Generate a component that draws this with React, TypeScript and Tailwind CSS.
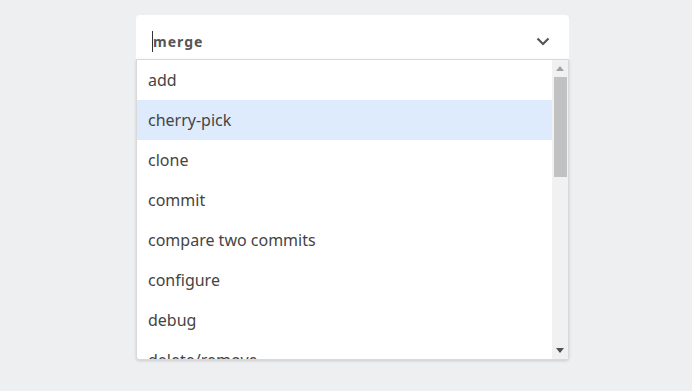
import React from 'react';

const commands = [
  'add',
  'cherry-pick',
  'clone',
  'commit',
  'compare two commits',
  'configure',
  'debug',
  'delete/remove',
];

const App = () => {
  const active = 'cherry-pick';

  return (
    <div className="min-h-[391px] w-full bg-[#eeeff1] pt-[15px] font-['Noto_Sans',sans-serif]">
      <div className="ml-[136px] w-[433px]">
        <div className="flex h-[44px] items-center justify-between rounded-t-[4px] bg-white pl-4 pr-[19px] pt-2">
          <div className="flex items-center">
            <span className="h-[21px] w-px bg-[#333]" />
            <span className="text-[14px] font-bold tracking-[1px] text-[#555]">merge</span>
          </div>
          <svg width="14" height="9" viewBox="0 0 14 9" fill="none">
            <path d="M1.5 1.5 L7 7 L12.5 1.5" stroke="#555" strokeWidth="2.2" />
          </svg>
        </div>
        <div className="flex h-[301px] rounded-b-[3px] border border-[#d9d9d9] bg-white shadow-[0_1px_3px_rgba(0,0,0,0.15)]">
          <div className="flex-1 overflow-hidden">
            {commands.map((c) => (
              <div
                key={c}
                className={
                  'flex h-[40px] items-center pl-[11px] text-[16px] text-[#444] ' +
                  (c === active ? 'bg-[#deebfd]' : '')
                }
              >
                {c}
              </div>
            ))}
          </div>
          <div className="flex w-[16px] flex-col bg-[#f1f1f1]">
            <div className="flex h-[17px] items-center justify-center">
              <svg width="8" height="5" viewBox="0 0 8 5">
                <path d="M0 5 L4 0 L8 5 Z" fill="#a3a3a3" />
              </svg>
            </div>
            <div className="ml-[2px] mr-[1px] h-[100px] bg-[#c1c1c1]" />
            <div className="flex-1" />
            <div className="flex h-[17px] items-center justify-center">
              <svg width="8" height="5" viewBox="0 0 8 5">
                <path d="M0 0 L8 0 L4 5 Z" fill="#505050" />
              </svg>
            </div>
          </div>
        </div>
      </div>
    </div>
  );
};

export default App;
